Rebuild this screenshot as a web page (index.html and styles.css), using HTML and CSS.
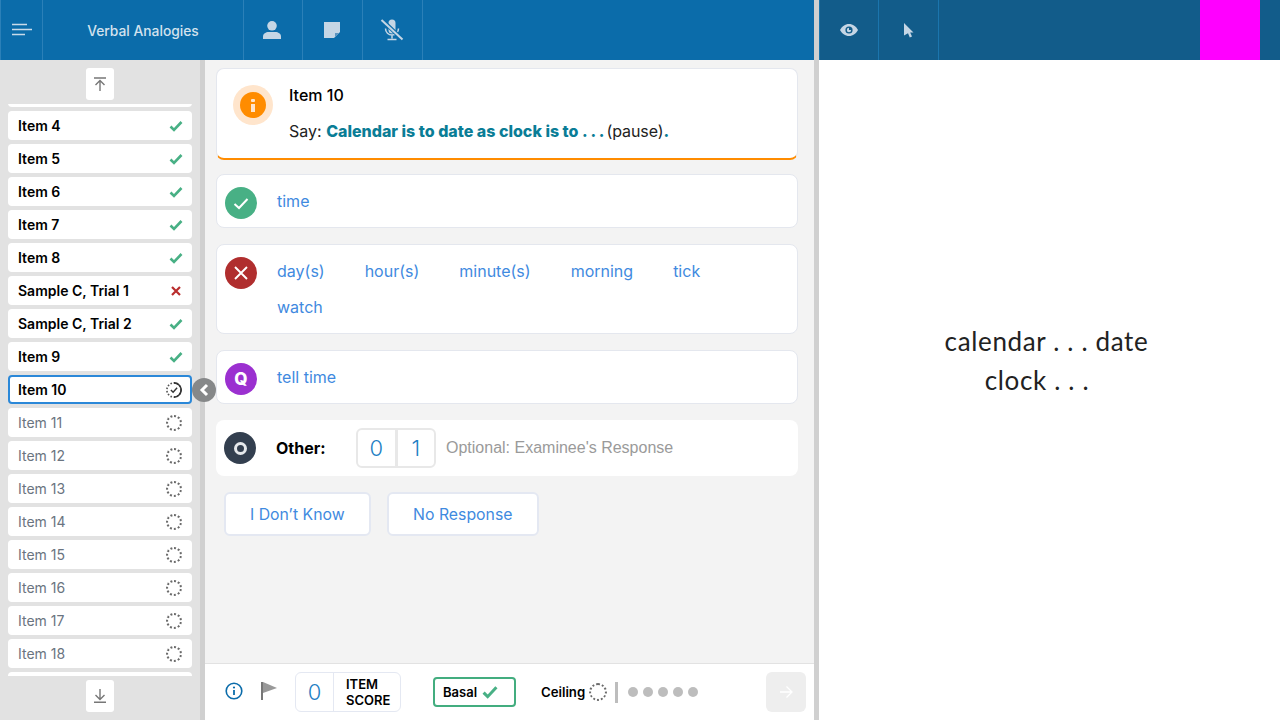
FILE: index.html
```html
<!DOCTYPE HTML>
<html>
<head>
<meta http-equiv="Content-Type" content="text/html; charset=utf-8">
<title>Verbal Analogies</title>
<link rel="stylesheet" href="styles.css">
</head>
<body>
<svg class="sprite" width="0" height="0">
  <symbol id="tick" viewBox="0 0 14 12"><path d="M1.500 6.500 5 10 12.500 2" fill="none" stroke="currentColor" stroke-width="2.600"/></symbol>
  <symbol id="cross" viewBox="0 0 12 12"><path d="M2 2 10 10M10 2 2 10" fill="none" stroke="currentColor" stroke-width="2.200"/></symbol>
</svg>
<div class="screen">
  <div class="left">
    <div class="topbar">
      <div class="cell menu-cell">
        <svg width="20" height="14" viewBox="0 0 20 14"><path d="M0 1.500H15M0 6.500H20M0 11.500H13" stroke="#c9dbe9" stroke-width="1.700"/></svg>
      </div>
      <div class="cell title-cell">Verbal Analogies</div>
      <div class="cell">
        <svg width="18" height="18" viewBox="0 0 18 18"><circle cx="9" cy="4.800" r="4.800" fill="#c5d6e5"/><path d="M0 18v-2.500C0 12.500 3 11 5.500 11h7c2.500 0 5.500 1.500 5.500 4.500V18z" fill="#c5d6e5"/></svg>
      </div>
      <div class="cell">
        <svg width="16" height="16" viewBox="0 0 16 16"><path d="M0 0H16V10L10 16H0z" fill="#c5d6e5"/><path d="M11 15v-4h4z" fill="#5d95c0"/></svg>
      </div>
      <div class="cell">
        <svg width="24" height="22" viewBox="0 0 24 22"><path d="M8.500 4a3.500 3.500 0 0 1 7 0v7a3.500 3.500 0 0 1-7 0z" fill="#c5d6e5"/><path d="M5.500 9.500c0 4 3 6.500 6.500 6.500s6.500-2.500 6.500-6.500M12 16v3.500M7.500 20.500h9" fill="none" stroke="#c5d6e5" stroke-width="1.500"/><path d="M2 1 22 20" stroke="#0b6caa" stroke-width="4"/><path d="M1.500 1 22.500 20.500" stroke="#c5d6e5" stroke-width="2"/></svg>
      </div>
    </div>
    <div class="body">
      <div class="sidebar">
        <div class="jump">
          <button class="jump-btn">
            <svg width="14" height="14" viewBox="0 0 14 14"><path d="M1 1H13M7 14V4M2.500 8 7 3.500 11.500 8" fill="none" stroke="#777" stroke-width="1.400"/></svg>
          </button>
        </div>
        <ul class="items">
          <li class="first"></li>
          <li class="done"><span>Item 4</span><svg class="ok"><use href="#tick"/></svg></li>
          <li class="done"><span>Item 5</span><svg class="ok"><use href="#tick"/></svg></li>
          <li class="done"><span>Item 6</span><svg class="ok"><use href="#tick"/></svg></li>
          <li class="done"><span>Item 7</span><svg class="ok"><use href="#tick"/></svg></li>
          <li class="done"><span>Item 8</span><svg class="ok"><use href="#tick"/></svg></li>
          <li class="done"><span>Sample C, Trial 1</span><svg class="bad"><use href="#cross"/></svg></li>
          <li class="done"><span>Sample C, Trial 2</span><svg class="ok"><use href="#tick"/></svg></li>
          <li class="done"><span>Item 9</span><svg class="ok"><use href="#tick"/></svg></li>
          <li class="done current"><span>Item 10</span>
            <svg width="16" height="16" viewBox="0 0 18 18"><circle cx="9" cy="9" r="8" fill="none" stroke="#555" stroke-width="1.800" stroke-dasharray="1.800 1.900"/><path d="M9 1A8 8 0 0 1 9 17" fill="none" stroke="#333" stroke-width="1.800"/><path d="M5.500 9 8 11.500 12.500 6.500" fill="none" stroke="#333" stroke-width="1.600"/></svg>
          </li>
          <li><span>Item 11</span><i class="dots"></i></li>
          <li><span>Item 12</span><i class="dots"></i></li>
          <li><span>Item 13</span><i class="dots"></i></li>
          <li><span>Item 14</span><i class="dots"></i></li>
          <li><span>Item 15</span><i class="dots"></i></li>
          <li><span>Item 16</span><i class="dots"></i></li>
          <li><span>Item 17</span><i class="dots"></i></li>
          <li><span>Item 18</span><i class="dots"></i></li>
          <li></li>
        </ul>
        <div class="jump bottom">
          <button class="jump-btn">
            <svg width="14" height="14" viewBox="0 0 14 14"><path d="M1 13.300H13M7 0V10M2.500 6 7 10.500 11.500 6" fill="none" stroke="#777" stroke-width="1.400"/></svg>
          </button>
        </div>
        <button class="collapse">
          <svg width="10" height="14" viewBox="0 0 10 14"><path d="M8 2 3 7l5 5" fill="none" stroke="#fff" stroke-width="3"/></svg>
        </button>
      </div>
      <div class="main">
        <div class="content">
          <div class="card prompt">
            <div class="halo">
              <div class="info-dot">
                <svg width="4" height="13" viewBox="0 0 4 13"><rect width="4" height="3" y="0" rx="1" fill="#ffe5cc"/><rect width="4" height="8" y="5" fill="#ffe5cc"/></svg>
              </div>
            </div>
            <div class="prompt-text">
              <div class="prompt-title">Item 10</div>
              <div class="prompt-say">Say: <b>Calendar is to date as clock is to . . .</b><span class="pause">(pause)</span><b>.</b></div>
            </div>
          </div>
          <div class="card answer">
            <div class="badge green"><svg width="16" height="13" viewBox="0 0 16 13"><path d="M1.500 7 6 11 14.500 2" fill="none" stroke="#fff" stroke-width="2"/></svg></div>
            <div class="options"><a>time</a></div>
          </div>
          <div class="card answer wrong">
            <div class="badge red"><svg width="14" height="14" viewBox="0 0 14 14"><path d="M1 1 13 13M13 1 1 13" fill="none" stroke="#fff" stroke-width="1.900"/></svg></div>
            <div class="options"><a>day(s)</a><a>hour(s)</a><a>minute(s)</a><a>morning</a><a>tick</a><a>watch</a></div>
          </div>
          <div class="card answer">
            <div class="badge purple">Q</div>
            <div class="options"><a>tell time</a></div>
          </div>
          <div class="card other">
            <div class="badge slate"><i class="ring"></i></div>
            <div class="other-label">Other:</div>
            <div class="score-pick"><span>0</span><span>1</span></div>
            <div class="other-hint">Optional: Examinee's Response</div>
          </div>
          <div class="actions">
            <button class="action">I Don’t Know</button>
            <button class="action">No Response</button>
          </div>
        </div>
        <div class="footer">
          <svg class="foot-info" width="18" height="18" viewBox="0 0 18 18"><circle cx="9" cy="9" r="7.800" fill="none" stroke="#0b6caa" stroke-width="1.600"/><path d="M9 8v5" stroke="#0b6caa" stroke-width="1.800"/><circle cx="9" cy="5.500" r="1.100" fill="#0b6caa"/></svg>
          <svg class="foot-flag" width="16" height="20" viewBox="0 0 16 20"><path d="M1 1V19" stroke="#777" stroke-width="2"/><path d="M2 1 16 7 2 12z" fill="#999"/></svg>
          <div class="item-score"><span class="num">0</span><span class="lbl">ITEM<br>SCORE</span></div>
          <div class="basal">Basal <svg width="18" height="14" class="ok"><use href="#tick"/></svg></div>
          <div class="ceiling">Ceiling <i class="dots"></i></div>
          <div class="pips"><i></i><i></i><i></i><i></i><i></i></div>
          <button class="next">
            <svg width="14" height="14" viewBox="0 0 14 14"><path d="M1 7H13M7.500 1.500 13 7l-5.500 5.500" fill="none" stroke="#fff" stroke-width="1.300"/></svg>
          </button>
        </div>
      </div>
    </div>
  </div>
  <div class="right">
    <div class="topbar dark">
      <div class="cell">
        <svg width="18" height="12" viewBox="0 0 18 12"><path d="M0 6C2 2.500 5 0 9 0s7 2.500 9 6c-2 3.500-5 6-9 6S2 9.500 0 6z" fill="#c5d6e5"/><circle cx="9" cy="6" r="3.600" fill="#125c8a"/><path d="M9 3.800A2.200 2.200 0 1 0 11.200 6H9z" fill="#c5d6e5"/></svg>
      </div>
      <div class="cell">
        <svg width="10" height="15" viewBox="0 0 10 15"><path d="M0 0 9.500 9.500H6.200L8 13.500 5.800 14.500 4 10.300 0 12.500z" fill="#c5d6e5"/></svg>
      </div>
      <div class="magenta"></div>
    </div>
    <div class="stimulus">
      <div>calendar . . . date</div>
      <div class="stimulus-second">clock . . .</div>
    </div>
  </div>
</div>
</body>
</html>
```

FILE: styles.css
```css
* {box-sizing:border-box;}
html, body {margin:0; height:100%; overflow:hidden;}
body {font-family:Inter, "Liberation Sans", sans-serif; color:#000; background:#fff;}
button {font-family:inherit; cursor:pointer;}
.sprite {position:absolute;}

.screen {display:flex; width:1280px; height:720px;}
.left {width:814px; display:flex; flex-direction:column;}
.right {flex:1; display:flex; flex-direction:column; border-left:5px solid #d0d0d0;}

.topbar {height:60px; flex:none; display:flex; background:#0b6caa;}
.topbar.dark {background:#125c8a;}
.cell {width:60px; display:flex; align-items:center; justify-content:center; border-right:1px solid #2b80b8; color:#c5d6e5;}
.menu-cell {width:43px; border-left:1px solid #2b80b8;}
.title-cell {width:201px; padding-top:1px; font-size:13.800px; font-weight:500; color:#d3e2ee;}
.title-cell + .cell {width:59px;}
.title-cell ~ .cell svg {margin-right:2px;}
.dark .cell {border-right-color:#1b75ad;}
.dark .cell:first-child {border-left:1px solid #1b75ad;}
.magenta {width:60px; margin-left:auto; margin-right:20px; background:#ff00ff;}

.body {flex:1; display:flex; min-height:0;}

/* item list */
.sidebar {position:relative; width:205px; flex:none; background:#e2e2e2; border-right:5px solid #d0d0d0; display:flex; flex-direction:column;}
.jump {height:44px; flex:none; display:flex; justify-content:center; padding-top:8px;}
.jump.bottom {padding-top:4px;}
.jump-btn {width:28px; height:32px; padding:0; border:0; border-radius:3px; background:#fff; display:flex; align-items:center; justify-content:center;}
.items {list-style:none; margin:0; padding:0 8px; height:572px; overflow:hidden;}
.items li {height:29px; margin-bottom:4px; padding:0 10px; background:#fff; border-radius:4px; display:flex; align-items:center; justify-content:space-between; font-size:14px; color:#6a7480;}
.items li.first {margin-top:-26px;}
.items li.done {color:#000; font-weight:600;}
.items li.current {border:2px solid #2b88d8; padding:0 8px;}
.ok {width:14px; height:12px; margin-right:-1px; color:#48b085;}
.bad {width:12px; height:12px; color:#b92c2c;}
.dots {display:block; width:16px; height:16px; border-radius:50%; border:2px dotted #6a6a6a;}
.collapse {position:absolute; left:192px; top:318px; width:24px; height:24px; padding:0; border:0; border-radius:50%; background:#868889; display:flex; align-items:center; justify-content:center;}

/* main column */
.main {flex:1; min-width:0; background:#f3f3f3; display:flex; flex-direction:column;}
.content {flex:1; padding:8px 16px 0 11px;}
.card {background:#fff; border:1px solid #e4e7ee; border-radius:8px;}
.prompt {height:92px; margin-bottom:14px; padding:16px 16px 0 16px; display:flex; border-bottom:2px solid #ff8c00; gap:16px;}
.halo {width:40px; height:40px; border-radius:50%; background:#ffe5cc; display:flex; align-items:center; justify-content:center; flex:none;}
.info-dot {width:26px; height:26px; border-radius:50%; background:#ff8c00; display:flex; align-items:center; justify-content:center;}
.prompt-title {font-size:16px; font-weight:500; line-height:20px;}
.prompt-say {font-size:16px; line-height:20px; margin-top:16px; color:#222;}
.prompt-say b {color:#0a7d96; font-weight:800;}
.pause {margin-left:2px; letter-spacing:-.1px;}

.answer {display:flex; align-items:flex-start; padding:12px 8px 0; height:54px; margin-bottom:16px;}
.answer.wrong {height:90px;}
.badge {width:32px; height:32px; border-radius:50%; flex:none; display:flex; align-items:center; justify-content:center; color:#fff;}
.green {background:#48b085;}
.red {background:#b02e2e;}
.purple {background:#9b30d0; font-weight:800; font-size:17px;}
.slate {background:#333f4f;}
.ring {display:block; width:13px; height:13px; border-radius:50%; border:3px solid #e6e9ec;}
.options {display:flex; flex-wrap:wrap; margin:-4px 0 0 20px; column-gap:40px; max-width:480px;}
.options a {font-size:16px; line-height:36px; height:36px; color:#3f8ae0;}

.other {height:56px; border:0; display:flex; align-items:center; padding:0 8px; margin-bottom:16px;}
.other-label {font-size:16px; font-weight:700; margin-left:20px; width:80px;}
.score-pick {display:flex; border:2px solid #e8e8e8; border-radius:6px; height:40px; width:80px;}
.score-pick span {flex:1; display:flex; align-items:center; justify-content:center; font-size:22px; font-weight:300; color:#1f7fc4;}
.score-pick span + span {border-left:3px solid #e8e8e8;}
.other-hint {margin-left:10px; font-size:16px; color:#9a9a9a; font-family:"Liberation Sans", sans-serif;}

.actions {display:flex; gap:16px; padding-left:8px;}
.action {height:44px; padding:0 24px; background:#fff; border:2px solid #e4e8f2; border-radius:6px; font-size:15.800px; color:#3f8ae0;}
.action + .action {padding:0 24.500px;}

/* footer */
.footer {height:57px; flex:none; background:#fff; border-top:1px solid #e2e2e2; display:flex; align-items:center; padding:0 8px 0 20px;}
.foot-info {margin-top:-2px;}
.foot-flag {margin:-2px 0 0 18px;}
.item-score {display:flex; align-items:stretch; height:40px; margin-left:18px; width:106px; border:1px solid #e4e8f2; border-radius:6px;}
.item-score .num {width:38px; display:flex; align-items:center; justify-content:center; font-size:22px; font-weight:300; color:#1f7fc4; border-right:1px solid #e4e8f2;}
.item-score .lbl {padding:0 0 0 12px; font-size:13px; font-weight:600; line-height:16px; align-self:center;}
.basal {margin-left:32px; height:30px; width:83px; border:2px solid #43ad7f; border-radius:4px; display:flex; align-items:center; gap:4px; padding-left:8px; font-size:13px; font-weight:600;}
.basal .ok {width:18px; height:14px;}
.ceiling {display:flex; align-items:center; gap:4px; margin-left:25px; font-size:13.200px; font-weight:600; padding-right:8px; border-right:3px solid #bdbdbd; height:21px;}
.ceiling .dots {width:18px; height:18px;}
.pips {display:flex; gap:5px; margin-left:10px;}
.pips i {display:block; width:10px; height:10px; border-radius:50%; background:#bdbdbd;}
.next {margin-left:auto; width:40px; height:40px; border:0; border-radius:6px; background:#eee; display:flex; align-items:center; justify-content:center; padding:0;}

/* stimulus */
.stimulus {flex:1; display:flex; flex-direction:column; align-items:center; justify-content:center; padding:0 6px 59px 0; font-family:Lato, sans-serif; font-size:26px; line-height:39px; letter-spacing:.65px; color:#222;}
.stimulus-second {margin-right:19px;}
```
